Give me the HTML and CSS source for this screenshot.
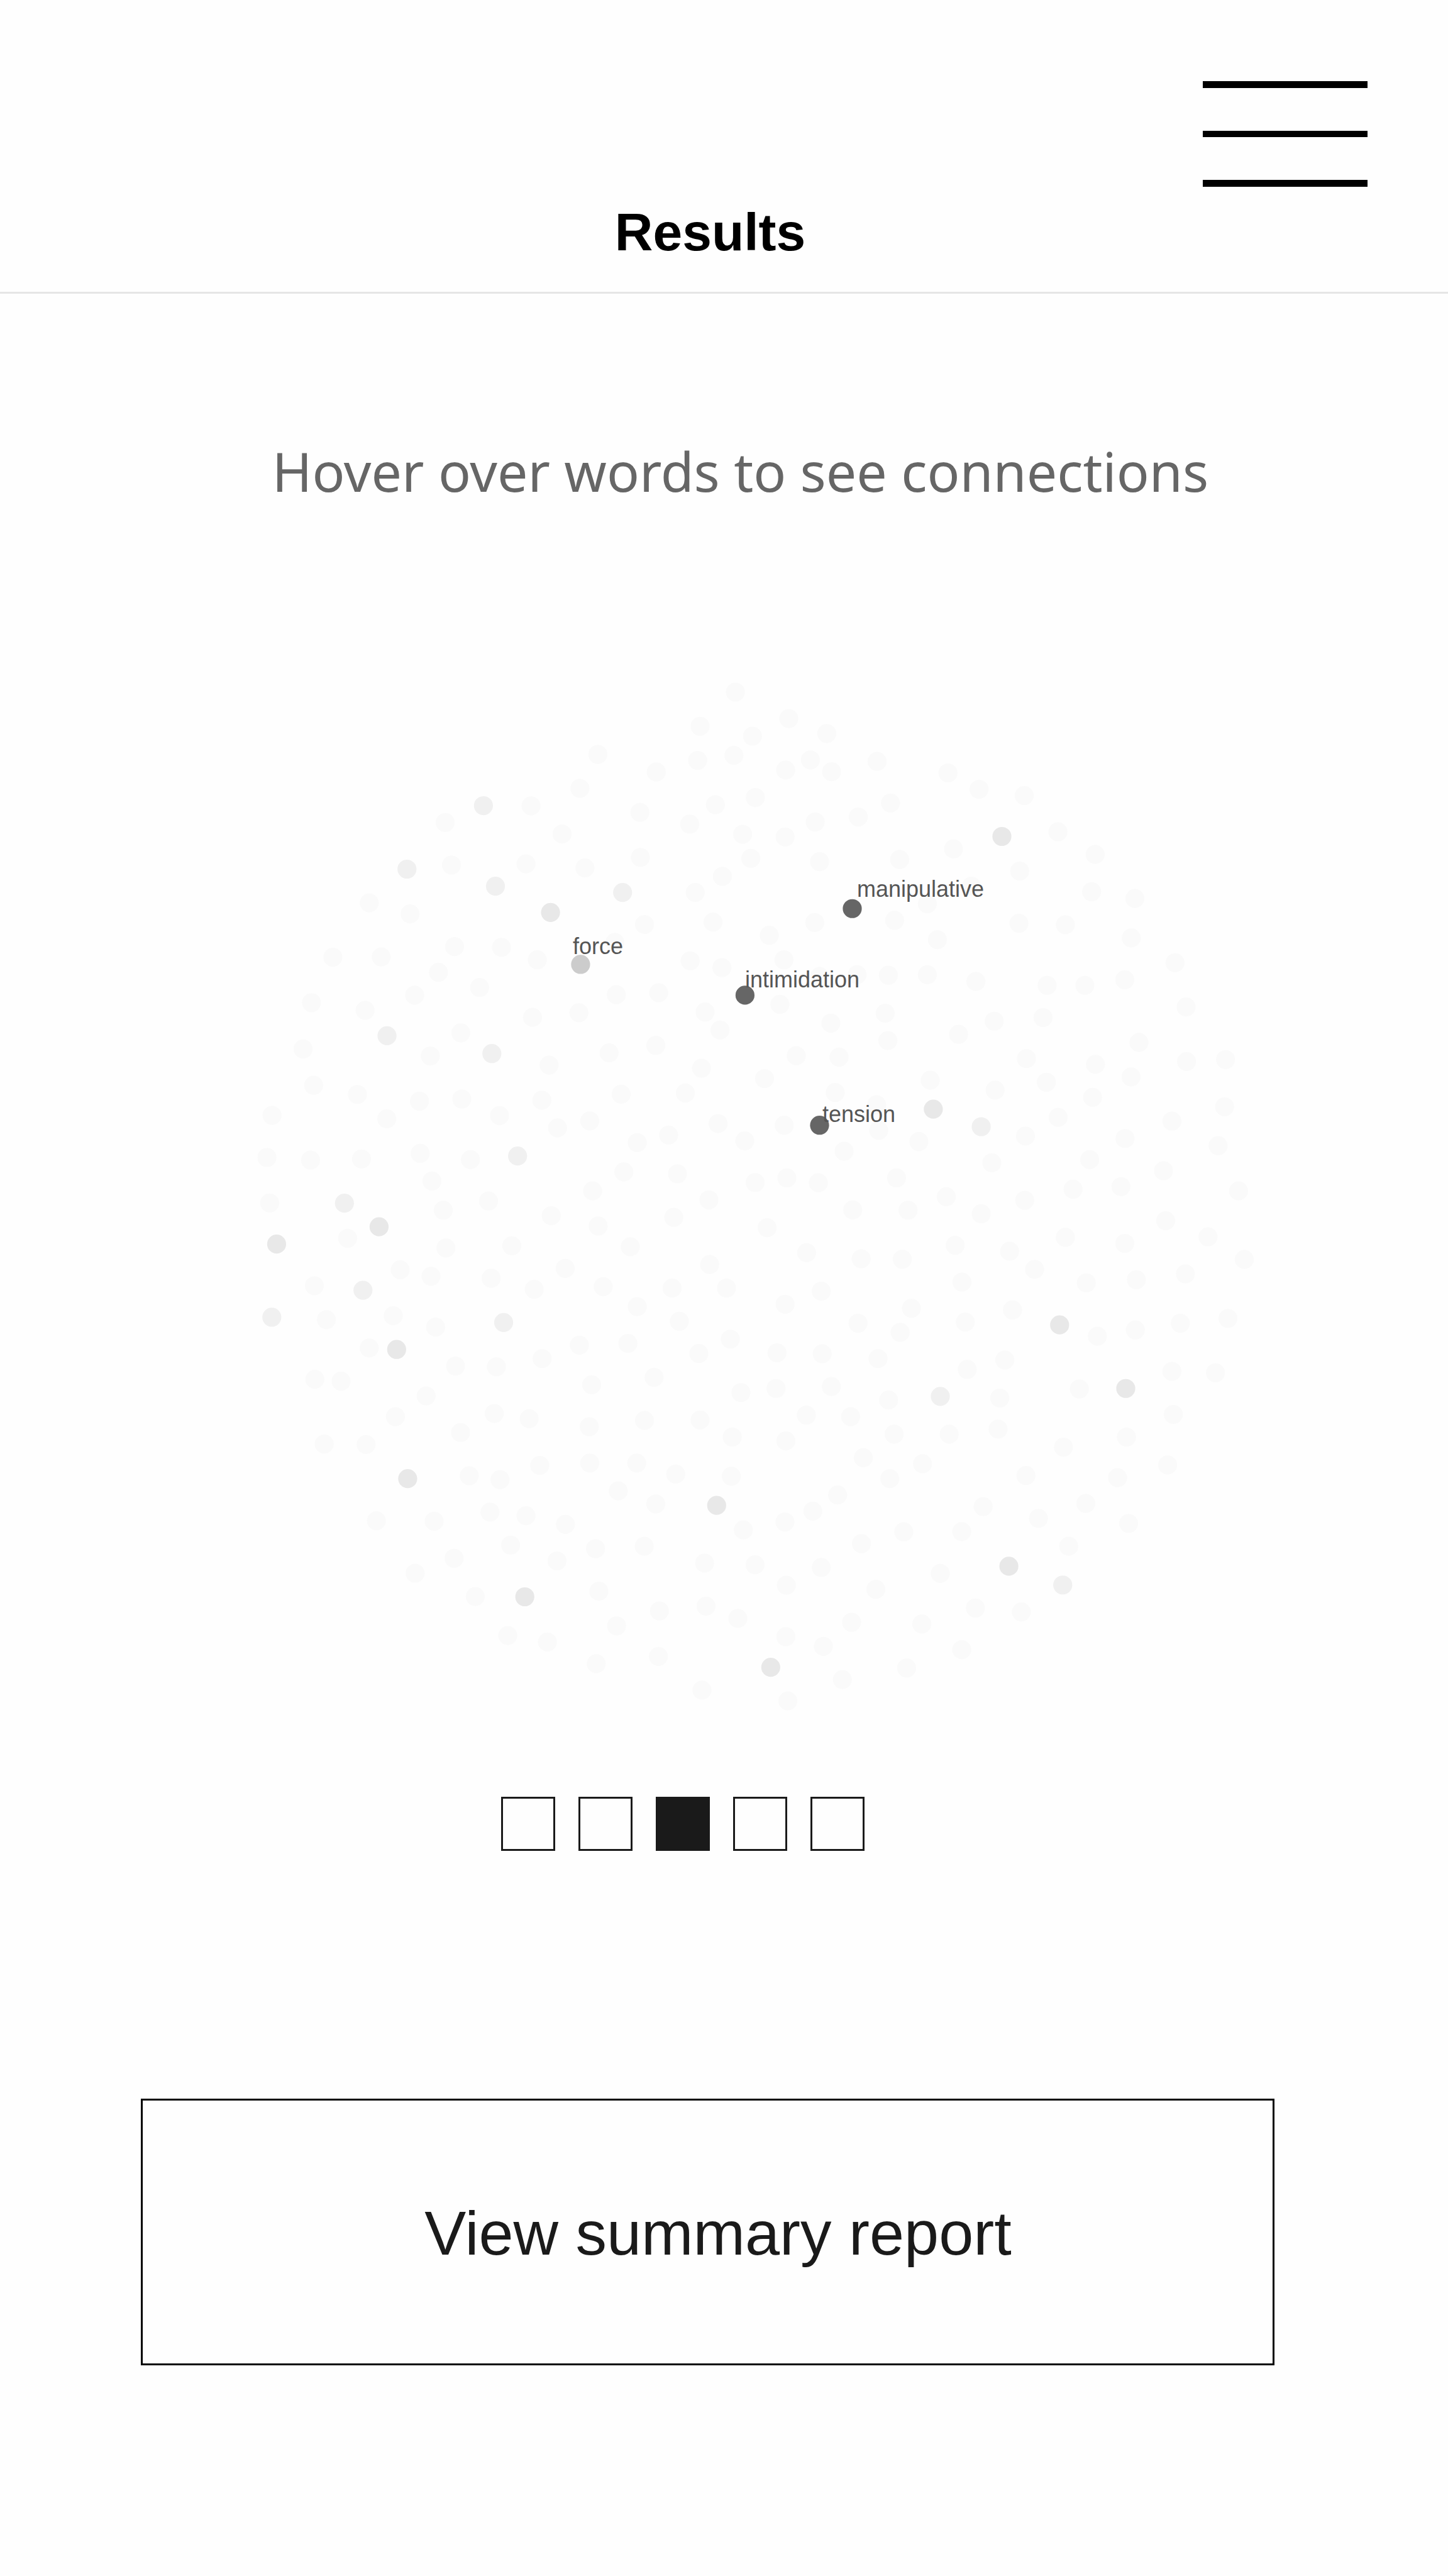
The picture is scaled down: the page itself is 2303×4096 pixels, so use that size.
FILE: index.html
```html
<!DOCTYPE html>
<html lang="en">
<head>
<meta charset="utf-8">
<meta name="viewport" content="width=device-width, initial-scale=1">
<title>Results</title>
<link rel="stylesheet" href="styles.css">
</head>
<body>
<header class="header">
  <button class="menu" type="button" aria-label="Menu">
    <svg class="menu-icon" viewBox="0 0 262 168" aria-hidden="true">
      <rect width="262" height="11"/>
      <rect y="79" width="262" height="10"/>
      <rect y="157" width="262" height="11"/>
    </svg>
  </button>
  <h1 class="title">Results</h1>
</header>
<main class="main">
  <p class="prompt">Hover over words to see connections</p>
  <svg class="cloud" viewBox="0 0 2303 1740" role="img" aria-label="Word connections">
    <g transform="translate(360 0) scale(.3825)">
      <path class="dots faint" d="M1545 391h0M1470 532h0M1267 605h0M910 674h0M1396 722h0M936 851h0M1246 846h0M1491 863h0M594 1008h0M764 1054h0M443 1234h0M644 1233h0M949 1190h0M1144 1193h0M1293 1245h0M882 1297h0M1053 1360h0M783 1392h0M354 1423h0M577 1455h0M1273 1484h0M1466 1465h0"/>
      <path class="dots light" d="M1069 604h0M751 868h0M1119 939h0"/>
      <path class="dots soft" d="M1348 1048h0"/>
      <path class="dots mid" d="M1473 1264h0"/>
    </g>
    <g transform="translate(960 0) scale(.3825)">
      <path class="dots faint" d="M548 132h0M401 274h0M770 242h0M619 315h0M928 304h0M391 416h0M542 395h0M860 414h0M757 456h0M948 463h0M1137 420h0M219 464h0M1432 468h0M631 570h0M465 600h0M358 681h0M151 632h0M578 723h0M755 734h0M880 672h0M1059 651h0M1193 593h0M153 819h0M612 823h0M898 837h0M1231 828h0M1455 784h0M494 898h0M381 965h0M1529 939h0M170 1098h0M455 1088h0M878 1090h0M689 1143h0M1346 1012h0M1210 1081h0M1388 1161h0M47 1173h0M360 1249h0M492 1277h0M750 1245h0M898 1314h0M1054 1307h0M1184 1309h0M1346 1307h0M53 1390h0M229 1382h0M733 1430h0M422 1462h0M484 1537h0M945 1508h0M1171 1467h0"/>
      <path class="dots light" d="M79 965h0"/>
      <path class="dots dark" d="M1034 1032h0M588 1392h0"/>
    </g>
    <g transform="translate(1499 0) scale(.3825)">
      <path class="dots faint" d="M152 536h0M340 562h0M480 713h0M635 807h0M321 876h0M620 962h0M800 990h0M318 1093h0M511 1099h0M785 1154h0M967 1257h0M139 1335h0M435 1351h0M592 1351h0M758 1328h0M1013 1441h0M215 1500h0M418 1485h0"/>
      <path class="dots soft" d="M247 732h0"/>
    </g>
    <g transform="translate(360 569) scale(.3825)">
      <path class="dots faint" d="M319 128h0M975 61h0M848 157h0M1342 195h0M363 279h0M545 317h0M803 345h0M979 336h0M1136 405h0M1312 341h0M1377 456h0M1511 427h0M190 404h0M667 418h0M169 579h0M350 590h0M562 585h0M806 562h0M1015 588h0M855 677h0M180 768h0M1523 718h0M902 798h0M1090 760h0M1351 821h0M1546 864h0M504 915h0M913 955h0M1187 946h0M723 1046h0M851 1073h0M1101 1081h0M1409 1040h0M366 1112h0M1280 1127h0M1567 1116h0M416 1253h0M694 1237h0M870 1284h0M594 1371h0M953 1446h0M1123 1449h0M1313 1415h0M1468 1359h0M368 1501h0M477 1509h0M1519 1524h0"/>
      <path class="dots light" d="M668 73h0M1104 147h0M1211 573h0M491 769h0M568 1131h0M189 1243h0M1153 1265h0"/>
      <path class="dots soft" d="M635 867h0M209 939h0M708 1377h0"/>
    </g>
    <g transform="translate(960 569) scale(.3825)">
      <path class="dots faint" d="M23 144h0M217 113h0M407 208h0M669 251h0M801 156h0M979 162h0M1182 93h0M1358 258h0M73 316h0M340 311h0M963 309h0M1135 360h0M476 438h0M751 445h0M1144 466h0M1311 513h0M140 517h0M270 486h0M587 510h0M1000 553h0M84 639h0M307 647h0M630 683h0M762 664h0M893 684h0M1218 664h0M1425 742h0M438 755h0M292 828h0M1036 797h0M1266 798h0M680 871h0M111 950h0M844 975h0M1071 1000h0M1242 1002h0M441 1024h0M1462 944h0M285 1122h0M511 1122h0M905 1135h0M755 1189h0M1490 1097h0M140 1199h0M315 1260h0M1280 1206h0M1058 1268h0M1233 1306h0M1504 1263h0M101 1352h0M396 1394h0M527 1334h0M721 1391h0M909 1395h0M1141 1415h0M1512 1460h0M210 1493h0"/>
      <path class="dots soft" d="M1371 378h0"/>
      <path class="dots dark" d="M898 445h0"/>
    </g>
    <g transform="translate(1499 569) scale(.3825)">
      <path class="dots faint" d="M67 67h0M817 101h0M1015 180h0M1177 172h0M349 168h0M636 192h0M784 244h0M432 266h0M219 299h0M624 329h0M1173 368h0M481 412h0M954 428h0M345 490h0M759 500h0M1146 530h0M205 601h0M612 588h0M919 634h0M543 711h0M742 700h0M1231 718h0M342 757h0M161 813h0M928 842h0M1104 909h0M511 911h0M758 936h0M279 969h0M1255 1003h0M383 1044h0M1010 1063h0M598 1100h0M806 1087h0M291 1213h0M644 1322h0M802 1296h0M989 1268h0M1187 1248h0M259 1421h0M954 1468h0M1135 1474h0"/>
      <path class="dots light" d="M161 451h0"/>
      <path class="dots soft" d="M487 1275h0"/>
    </g>
    <g transform="translate(360 1139) scale(.3825)">
      <path class="dots faint" d="M831 80h0M703 166h0M1114 153h0M1259 175h0M1509 208h0M974 232h0M407 280h0M581 282h0M1303 369h0M1511 359h0M1010 412h0M1138 428h0M624 599h0M864 601h0M1096 563h0M1246 578h0M1410 614h0M1182 700h0M947 755h0M785 817h0M1375 766h0M1535 715h0M1035 914h0M1549 892h0M1170 1076h0M1335 1103h0M1538 1193h0"/>
      <path class="dots soft" d="M754 424h0M1241 915h0"/>
    </g>
    <g transform="translate(960 1139) scale(.3825)">
      <path class="dots faint" d="M571 66h0M717 49h0M947 41h0M1185 97h0M170 182h0M401 180h0M843 160h0M1027 166h0M535 251h0M758 267h0M1208 239h0M1437 239h0M138 359h0M300 405h0M531 414h0M1080 337h0M1326 362h0M61 475h0M217 529h0M1190 424h0M973 492h0M870 559h0M581 637h0M754 604h0M1248 645h0M1489 644h0M1072 694h0M169 705h0M420 775h0M630 782h0M905 793h0M760 867h0M1400 818h0M1132 884h0M232 974h0M426 954h0M558 1005h0M54 1036h0M758 1081h0M1031 1021h0M1323 1028h0M914 1121h0M228 1163h0M1489 1135h0M1260 1211h0M409 1303h0M993 1259h0M766 1348h0M1546 962h0"/>
      <path class="dots light" d="M1400 82h0"/>
      <path class="dots soft" d="M470 535h0M695 1208h0"/>
    </g>
    <g transform="translate(1499 1139) scale(.3825)">
      <path class="dots faint" d="M238 89h0M569 51h0M960 157h0M231 218h0M765 251h0M503 293h0M347 411h0M936 367h0M728 420h0M169 540h0M596 527h0M399 589h0M774 610h0M525 705h0M328 978h0"/>
      <path class="dots light" d="M500 866h0"/>
      <path class="dots soft" d="M762 49h0M276 788h0"/>
    </g>
    <g class="labels">
      <text x="911" y="467">force</text>
      <text x="1363" y="376">manipulative</text>
      <text x="1185" y="520">intimidation</text>
      <text x="1308" y="734">tension</text>
    </g>
  </svg>
  <nav class="pager" aria-label="Result pages">
    <button class="page" type="button" aria-label="Page 1"></button>
    <button class="page" type="button" aria-label="Page 2"></button>
    <button class="page current" type="button" aria-label="Page 3" aria-current="page"></button>
    <button class="page" type="button" aria-label="Page 4"></button>
    <button class="page" type="button" aria-label="Page 5"></button>
  </nav>
  <button class="report" type="button">View summary report</button>
</main>
</body>
</html>
```

FILE: styles.css
```css
* {
  box-sizing: border-box;
}

body {
  margin: 0;
  background: #fefefe;
  color: #1a1a1a;
  font-family: "Liberation Sans", Arial, Helvetica, sans-serif;
}

button {
  margin: 0;
  padding: 0;
  background: none;
  border: 0;
  color: inherit;
  font: inherit;
  cursor: pointer;
}

.header {
  display: flex;
  flex-direction: column;
  gap: 24px;
  padding: 129px 128px 47px 84px;
  border-bottom: 3px solid #e6e6e6;
}

.menu {
  align-self: flex-end;
  width: 262px;
}

.menu-icon {
  display: block;
  width: 100%;
}

.title {
  margin: 0;
  color: #000;
  font-size: 84px;
  line-height: 96px;
  text-align: center;
}

.main {
  display: flex;
  flex-direction: column;
  padding: 222px 0 335px;
}

.prompt {
  margin: 0 0 241px;
  padding-left: 52px;
  color: #666;
  font-family: "Noto Sans", "Open Sans", sans-serif;
  font-size: 86px;
  line-height: 120px;
  text-align: center;
}

.cloud {
  display: block;
  width: 100%;
}

.dots {
  fill: none;
  stroke-width: 79;
  stroke-linecap: round;
}

.faint { stroke: #fafafa; }
.light { stroke: #f0f0f0; }
.soft { stroke: #e8e8e8; }
.mid { stroke: #ccc; }
.dark { stroke: #666; }

.labels {
  fill: #555;
  font-size: 36px;
}

.pager {
  display: flex;
  justify-content: center;
  gap: 37px;
  margin: 67px 0 394px;
  padding-right: 131px;
}

.page {
  width: 86px;
  height: 86px;
  border: 3px solid #1a1a1a;
}

.current {
  background: #1a1a1a;
}

.report {
  margin: 0 276px 0 224px;
  padding: 151px 0 147px 33px;
  border: 3px solid #000;
  font-size: 99px;
  line-height: 120px;
}
```
